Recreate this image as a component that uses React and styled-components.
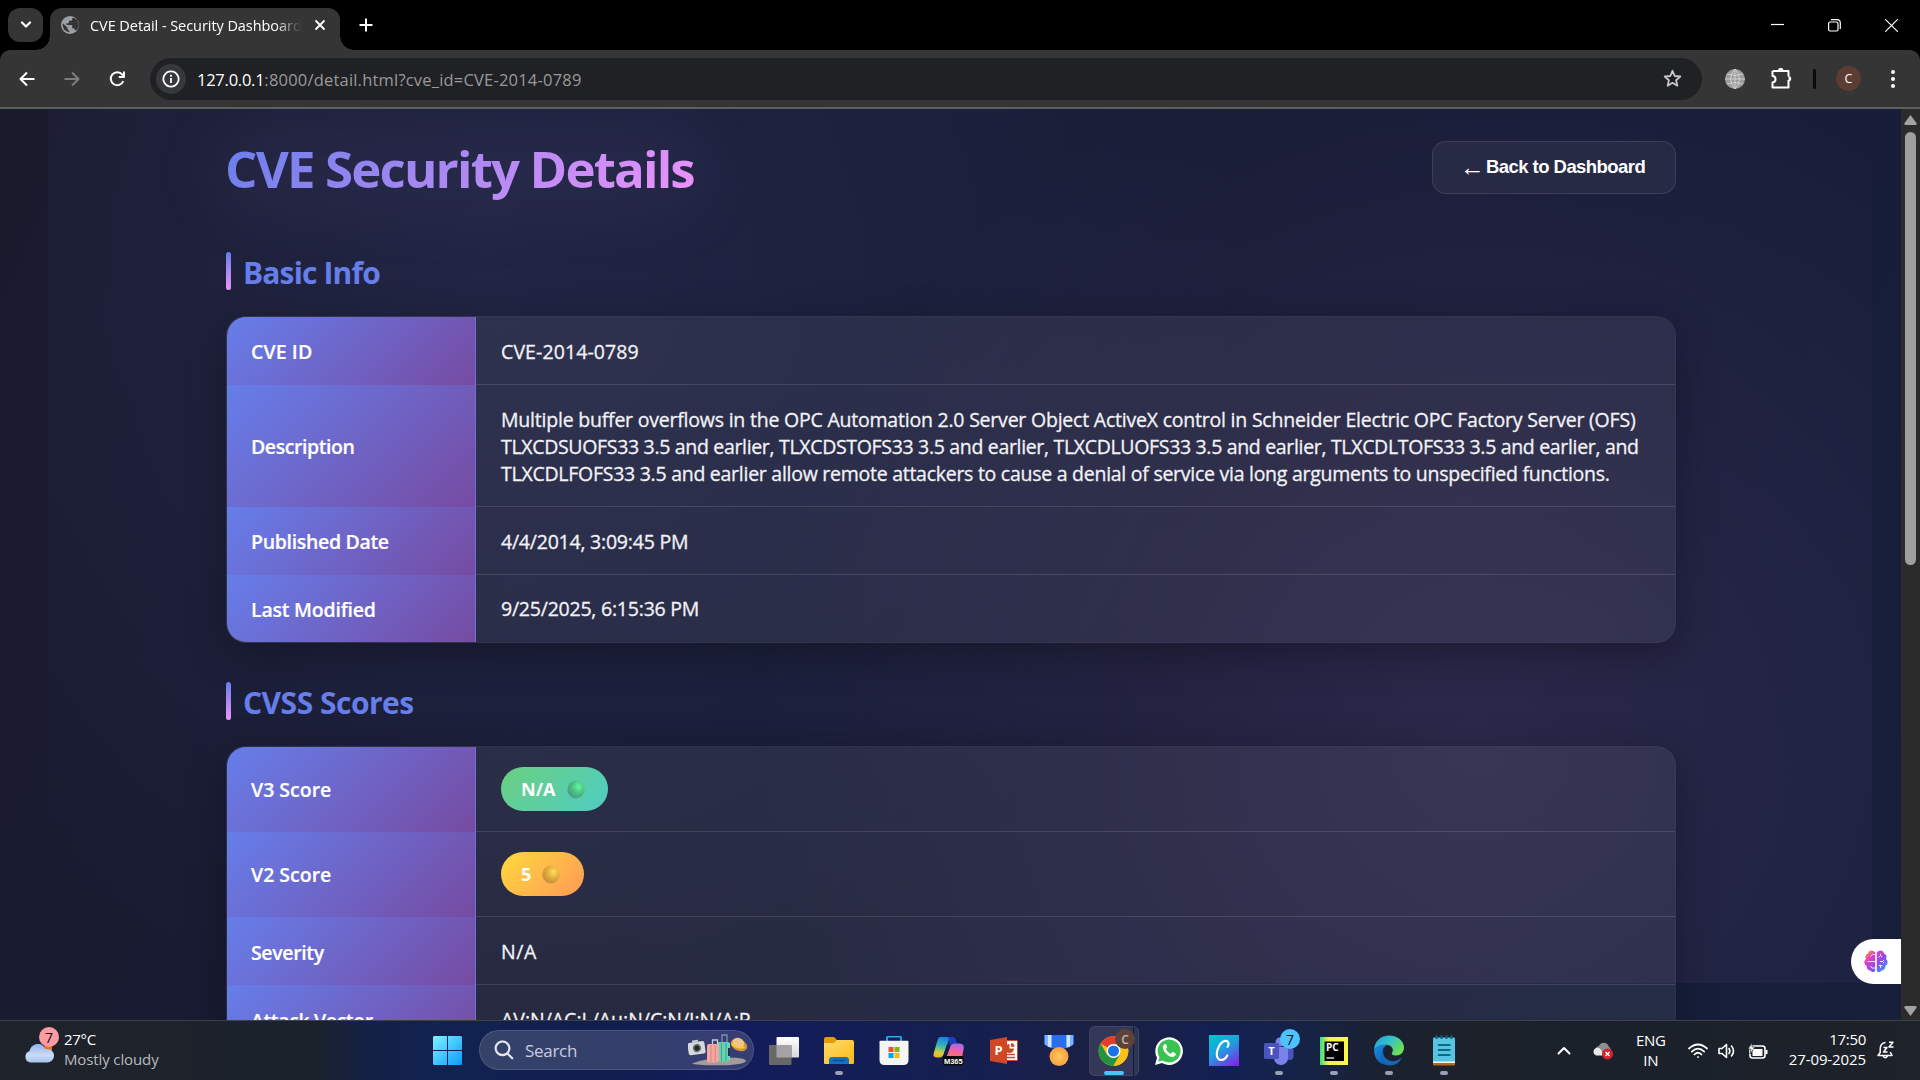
import React from "react";
import styled, { createGlobalStyle } from "styled-components";

const Global = createGlobalStyle`
  *, *::before, *::after { box-sizing: border-box; }
  html, body { margin: 0; padding: 0; background: #000; overflow: hidden; }
  body, button { font-family: "Open Sans", "Noto Sans", sans-serif; }
  svg { display: block; flex: none; }
`;

const Screen = styled.div`
  width: 1920px;
  height: 1080px;
  display: flex;
  flex-direction: column;
  overflow: hidden;
`;

/* Plain text whose tracking and size vary from use to use */
const Label = styled.span`
  font-size: ${(p) => p.$size}px;
  font-weight: ${(p) => p.$weight || 400};
  letter-spacing: ${(p) => p.$track || 0}px;
  color: ${(p) => p.$color || "#fff"};
  -webkit-text-stroke: ${(p) => p.$stroke || 0}px currentColor;
  white-space: pre;
`;

/* ---------- tab strip ---------- */
const TabStrip = styled.div`
  height: 50px;
  flex: none;
  display: flex;
  align-items: flex-start;
  padding: 8px 0 0 8px;
  background: #000;
`;
const TabSearch = styled.div`
  width: 35px;
  height: 34px;
  border-radius: 12px;
  background: #353535;
  display: grid;
  place-items: center;
`;
const Tab = styled.div`
  position: relative;
  width: 290px;
  height: 42px;
  margin-left: 7px;
  padding: 0 12px 0 11px;
  display: flex;
  align-items: center;
  background: #353535;
  border-radius: 12px 12px 0 0;
  &::before, &::after {
    content: "";
    position: absolute;
    bottom: 0;
    width: 14px;
    height: 14px;
  }
  &::before { left: -14px; background: radial-gradient(circle at 0 0, transparent 13.5px, #353535 14px); }
  &::after { right: -14px; background: radial-gradient(circle at 100% 0, transparent 13.5px, #353535 14px); }
`;
const TabTitle = styled.div`
  width: 212px;
  margin: -7px 0 0 11px;
  overflow: hidden;
  line-height: 20px;
  -webkit-mask-image: linear-gradient(90deg, #000 185px, transparent 211px);
  mask-image: linear-gradient(90deg, #000 185px, transparent 211px);
`;
const TabIcon = styled.div` margin-top: -8px; `;
const TabClose = styled.div` margin: -8px 0 0 12px; `;
const NewTab = styled.div`
  width: 34px;
  height: 34px;
  margin-left: 9px;
  display: grid;
  place-items: center;
`;
const WindowButtons = styled.div`
  margin-left: auto;
  height: 34px;
  display: flex;
  align-items: center;
`;
const WindowButton = styled.div`
  width: 57px;
  display: grid;
  place-items: center;
`;

/* ---------- toolbar ---------- */
const ToolbarWrap = styled.div` background: #000; flex: none; `;
const Toolbar = styled.div`
  height: 59px;
  padding: 1px 9px 1px 8px;
  display: flex;
  align-items: center;
  background: #353535;
  border-radius: 10px 10px 0 0;
  border-bottom: 2px solid #5d5f5e;
`;
const NavButton = styled.div`
  width: 38px;
  height: 38px;
  margin-right: 7px;
  display: grid;
  place-items: center;
`;
const Omnibox = styled.div`
  width: 1552px;
  height: 42px;
  margin: 0 0 0 7px;
  padding: 0 20px 0 6px;
  display: flex;
  align-items: center;
  border-radius: 21px;
  background: #202124;
`;
const Url = styled.div` padding-top: 1px; `;
const SiteInfo = styled.div`
  width: 30px;
  height: 30px;
  border-radius: 50%;
  background: #37383a;
  display: grid;
  place-items: center;
  margin-right: 11px;
`;
const Star = styled.div` margin-left: auto; `;
const ToolIcon = styled.div`
  width: ${(p) => p.$w}px;
  display: grid;
  place-items: center;
`;
const Divider = styled.div`
  width: 3px;
  height: 20px;
  border-radius: 2px;
  background: #0b0b0b;
  margin: 0 20px 0 8px;
`;
const Avatar = styled.div`
  width: 25px;
  height: 25px;
  border-radius: 50%;
  background: #5c3d33;
  display: grid;
  place-items: center;
`;

/* ---------- page ---------- */
const Viewport = styled.div`
  height: 911px;
  flex: none;
  display: flex;
  overflow: hidden;
`;
const Page = styled.main`
  position: relative;
  width: 1901px;
  height: 911px;
  overflow: hidden;
  background: linear-gradient(115deg, #1a1a2d 0%, #191c34 35%, #181d38 70%, #171f3b 100%);
`;
const Glow = styled.div`
  position: absolute;
  left: 48px;
  top: 0;
  width: 1824px;
  height: 874px;
  background:
    radial-gradient(circle at 24% 18%, rgba(102, 126, 234, 0.1), transparent 760px),
    radial-gradient(circle at 78% 72%, rgba(240, 147, 251, 0.09), transparent 720px);
`;
const Container = styled.div`
  position: relative;
  width: 1450px;
  margin-left: 226px;
`;
const Header = styled.header`
  display: flex;
  justify-content: space-between;
  align-items: flex-start;
  height: 143px;
  padding-top: 32px;
`;
const Title = styled.h1`
  margin: -9px 0 0 -1px;
  font-size: 51px;
  font-weight: 700;
  line-height: 72px;
  letter-spacing: ${(p) => p.$track}px;
  white-space: pre;
  color: transparent;
  background: linear-gradient(135deg, #667eea 0%, #f093fb 100%);
  -webkit-background-clip: text;
  background-clip: text;
  filter: drop-shadow(0 0 38px rgba(200, 147, 251, 0.25));
`;
const BackButton = styled.button`
  width: 244px;
  height: 53px;
  padding: 0 0 2px 25px;
  display: flex;
  align-items: center;
  border: 1px solid rgba(255, 255, 255, 0.1);
  border-radius: 14px;
  background: rgba(255, 255, 255, 0.05);
  color: #fff;
  font: 700 18.5px "Liberation Sans", Arial, sans-serif;
  letter-spacing: -0.55px;
  white-space: pre;
`;
const Arrow = styled.span`
  width: 28px;
  font-size: 25px;
  font-weight: 400;
  line-height: 20px;
`;
const SectionHead = styled.div`
  height: 38px;
  margin-bottom: ${(p) => p.$gap}px;
  display: flex;
  align-items: center;
  &::before {
    content: "";
    width: 5px;
    height: 38px;
    margin-right: 12px;
    border-radius: 2.5px;
    background: linear-gradient(180deg, #667eea, #f093fb);
  }
`;
const SectionTitle = styled.h2`
  margin: 0;
  padding-top: 4px;
  font-size: 30px;
  font-weight: 700;
  line-height: 38px;
  letter-spacing: ${(p) => p.$track}px;
  color: #667eea;
  white-space: pre;
`;
const Table = styled.div`
  margin-bottom: 39px;
  border: 1px solid rgba(255, 255, 255, 0.03);
  border-radius: 20px;
  overflow: hidden;
  background: rgba(255, 255, 255, 0.062);
  box-shadow: 0 10px 40px rgba(0, 0, 0, 0.3);
`;
const Row = styled.div`
  display: grid;
  grid-template-columns: 249px 1fr;
  height: ${(p) => p.$h}px;
`;
const Th = styled.div`
  padding: ${(p) => p.$drop}px 0 0 24px;
  display: flex;
  align-items: center;
  background: linear-gradient(135deg, #667eea 0%, #764ba2 100%);
  border-right: 1px solid #6a72d8;
`;
const Td = styled.div`
  padding: ${(p) => p.$drop}px 0 0 25px;
  display: flex;
  flex-direction: column;
  align-items: flex-start;
  justify-content: center;
  line-height: 27px;
  border-bottom: 1px solid ${(p) => (p.$last ? "transparent" : "rgba(255,255,255,0.12)")};
`;
const Badge = styled.div`
  height: 44px;
  padding: 0 24px 0 20px;
  display: flex;
  align-items: center;
  gap: 11px;
  border-radius: 22px;
  width: ${(p) => p.$w}px;
  background: linear-gradient(135deg, ${(p) => p.$from}, ${(p) => p.$to});
`;
const BrainTab = styled.div`
  position: absolute;
  right: 0;
  top: 830px;
  width: 50px;
  height: 45px;
  padding-left: 13px;
  display: flex;
  align-items: center;
  border-radius: 23px 0 0 23px;
  background: #fff;
`;
const Scrollbar = styled.div`
  width: 19px;
  background: #2b2b2b;
  display: flex;
  flex-direction: column;
  align-items: center;
  padding: 6px 0 4px;
`;
const Thumb = styled.div`
  width: 11px;
  height: 433px;
  margin: 7px 0 auto;
  border-radius: 6px;
  background: #9f9f9f;
`;

/* ---------- taskbar ---------- */
const Taskbar = styled.footer`
  height: 60px;
  flex: none;
  display: flex;
  border-top: 1px solid #3d4148;
  background: linear-gradient(90deg, #1e232b 0, #1c222b 310px, #142147 375px, #122250 440px, #101e50 620px, #131c5c 720px, #131e55 860px, #16204e 1000px, #1c2042 1110px, #122052 1220px, #15234a 1290px, #1a2130 1380px, #1d222a 1480px, #1a212b 1600px, #1e2229 1920px);
`;
const Weather = styled.div`
  width: 420px;
  padding: 5px 0 0 24px;
  display: flex;
`;
const Lines = styled.div`
  display: flex;
  flex-direction: column;
  align-items: ${(p) => p.$align || "flex-start"};
  margin: ${(p) => p.$shift || 0}px 0 0;
  line-height: 20px;
`;
const AppSlot = styled.div`
  width: 55px;
  height: 59px;
  display: grid;
  place-items: center;
  position: relative;
`;
const Running = styled.i`
  position: absolute;
  bottom: 5px;
  left: 50%;
  width: ${(p) => (p.$active ? 20 : 8)}px;
  height: 4px;
  margin-left: ${(p) => (p.$active ? -10 : -4)}px;
  border-radius: 2px;
  background: ${(p) => (p.$active ? "#4cc2ff" : "#9a9fb4")};
`;
const ActiveTile = styled.div`
  width: 50px;
  height: 50px;
  border-radius: 6px;
  background: linear-gradient(90deg, rgba(255,255,255,.11) 43px, rgba(0,0,0,.2) 43px, rgba(0,0,0,.2) 44px, rgba(255,255,255,.09) 44px);
  border: 1px solid rgba(255, 255, 255, 0.07);
  display: grid;
  place-items: center;
`;
const SearchBox = styled.div`
  width: 275px;
  height: 40px;
  margin: 9px 2px 0 4px;
  padding: 0 5px 0 14px;
  display: flex;
  align-items: center;
  border-radius: 20px;
  border: 1px solid rgba(255, 255, 255, 0.12);
  background: rgba(255, 255, 255, 0.15);
`;
const Count = styled.div`
  position: absolute;
  left: ${(p) => p.$x}px;
  top: ${(p) => p.$y}px;
  width: ${(p) => p.$d}px;
  height: ${(p) => p.$d}px;
  border-radius: 50%;
  background: ${(p) => p.$bg};
  display: grid;
  place-items: center;
`;
const WeatherIcon = styled.div`
  position: relative;
  width: 30px;
  height: 48px;
  padding-top: 17px;
  margin-right: 10px;
`;
const Tray = styled.div`
  margin-left: auto;
  display: flex;
  align-items: center;
  padding-right: 25px;
`;
const TrayItem = styled.div`
  width: ${(p) => p.$w}px;
  display: grid;
  place-items: center;
`;
const SearchArt = styled.div` margin-left: auto; `;
const Gap = styled.div` width: ${(p) => p.$w}px; flex: none; `;

/* ---------- drawings ---------- */
const Ball = ({ id, hi, mid, lo }) => (
  <svg width="18" height="19" viewBox="0 0 18 19">
    <defs>
      <radialGradient id={id} cx="0.65" cy="0.35" r="0.7">
        <stop offset="0" stopColor={hi} /><stop offset="0.55" stopColor={mid} /><stop offset="1" stopColor={lo} />
      </radialGradient>
    </defs>
    <ellipse cx="9" cy="9.5" rx="8.6" ry="9" fill={`url(#${id})`} />
  </svg>
);
const Globe = () => (
  <svg width="18" height="18" viewBox="0 0 18 18">
    <circle cx="9" cy="9" r="9" fill="#9aa0a8" />
    <path d="M11.3 1.8v1.4q0 1.5-1.6 1.5H8v1.6q0 .9-1 .9H5.500v1.700h4.700q1 0 1 1v2.400h.9q1.200 0 1.500 1.200l1.200 1.300A7.200 7.200 0 0 0 11.300 1.800zM8.200 16.200v-1.800q-1.700 0-1.700-1.700v-.9L1.900 7.300a7.200 7.200 0 0 0 6.300 8.900z" fill="#353535" />
  </svg>
);
const Windows = () => (
  <svg width="29" height="29" viewBox="0 0 29 29">
    <defs><linearGradient id="win" x1="0" y1="0" x2="1" y2="1"><stop offset="0" stopColor="#7df3ff" /><stop offset="1" stopColor="#0a9bff" /></linearGradient></defs>
    <path d="M1 0h13v14H0V1zM15 0h13l1 1v13H15zM0 15h14v14H1l-1-1zM15 15h14v13l-1 1H15z" fill="url(#win)" />
  </svg>
);
const Travel = () => (
  <svg width="60" height="32" viewBox="0 0 60 32">
    <path d="M4 29.500Q18 24 40 23.500q17 0 18 3.500-2 4-26 4.300-24 .2-28-1.800z" fill="#a39c98" />
    <g transform="rotate(-8 8 14)">
      <rect x="0" y="8" width="17" height="12.500" rx="2" fill="#d7d9dc" /><rect x="5" y="6" width="6" height="3" fill="#c5c8cc" />
      <circle cx="9" cy="14.200" r="4.200" fill="#6d757c" /><circle cx="9" cy="14.200" r="2.600" fill="#23282d" />
    </g>
    <path d="M34 8.500V1h5v7.500" fill="none" stroke="#7d8aa5" strokeWidth="1.400" />
    <rect x="29" y="8" width="13" height="19.500" rx="2" fill="#66d3b4" /><path d="M33.500 9v18M38 9v18" stroke="#3fa98d" strokeWidth="1.100" /><rect x="40" y="14" width="2" height="8" fill="#2a3340" />
    <path d="M24.500 10.500V6h5v4" fill="none" stroke="#c9cdd4" strokeWidth="1.300" />
    <rect x="19" y="10" width="12" height="18.500" rx="2" fill="#f2a8a2" /><path d="M23 11v17M27.200 11v17" stroke="#d98580" strokeWidth="1" />
    <ellipse cx="51" cy="11" rx="8.600" ry="5.800" fill="#cf9246" transform="rotate(24 51 11)" />
    <ellipse cx="50.500" cy="8.500" rx="6" ry="4.600" fill="#efc785" transform="rotate(20 50 8)" /><path d="M43.500 9.500c3 4 8 5 13 3.500" stroke="#ffc928" strokeWidth="2" fill="none" />
  </svg>
);
const TaskView = () => (
  <svg width="30" height="28" viewBox="0 0 30 28">
    <defs><linearGradient id="tv" x1="0" y1="0" x2="0" y2="1"><stop offset="0" stopColor="#fff" /><stop offset="1" stopColor="#d9d9d9" /></linearGradient></defs>
    <rect x="7.5" y="0" width="22.5" height="20.5" rx="1" fill="url(#tv)" />
    <rect x="0" y="8" width="22.5" height="20" rx="1" fill="#686868" /><rect x="7.5" y="8" width="15" height="12.5" fill="#a3a3a5" />
  </svg>
);
const Folder = () => (
  <svg width="30" height="28" viewBox="0 0 30 28">
    <defs><linearGradient id="fo" x1="0" y1="0" x2="1" y2="1"><stop offset="0" stopColor="#ffdc6b" /><stop offset="1" stopColor="#fbb917" /></linearGradient></defs>
    <path d="M0 2q0-2 2-2h8l3 3v6H0z" fill="#e29b09" />
    <path d="M0 6h10l3-3h15q2 0 2 2v21q0 1-1 1H1q-1 0-1-1z" fill="url(#fo)" />
    <path d="M5 27v-4q0-3 3-3h14q3 0 3 3v4z" fill="#0c74c8" /><path d="M9 23.5h12" stroke="#0a4f91" strokeWidth="1.4" />
  </svg>
);
const Store = () => (
  <svg width="30" height="30" viewBox="0 0 30 30">
    <path d="M8 7V2q0-1.300 1.300-1.300h11.400q1.300 0 1.300 1.300v5" fill="none" stroke="#1fb1e8" strokeWidth="1.8" />
    <path d="M.5 5.500q0-.8.8-.8h27.400q.8 0 .8.8V24q0 5-5 5h-19q-5 0-5-5z" fill="#f5f5f5" />
    <rect x="9.5" y="11" width="5" height="5" fill="#f25022" /><rect x="15.5" y="11" width="5" height="5" fill="#7fba00" />
    <rect x="9.5" y="17" width="5" height="5" fill="#00a4ef" /><rect x="15.5" y="17" width="5" height="5" fill="#ffb900" />
  </svg>
);
const M365 = () => (
  <svg width="31" height="30" viewBox="0 0 31 30">
    <defs>
      <linearGradient id="ma" x1="0.4" y1="0" x2="0.2" y2="1"><stop offset="0" stopColor="#1b7ff0" /><stop offset=".4" stopColor="#2fb9b5" /><stop offset=".75" stopColor="#d5cf3b" /><stop offset="1" stopColor="#f2b02b" /></linearGradient>
      <linearGradient id="mb" x1="0.6" y1="0" x2="0.3" y2="1"><stop offset="0" stopColor="#a46bf0" /><stop offset=".5" stopColor="#f062a8" /><stop offset="1" stopColor="#ff7a45" /></linearGradient>
    </defs>
    <path d="M7.500 1h12q-3 .5-4.500 5l-4.500 13q-.8 2.500-3 2.500H4Q-.5 21.500.8 17L4.300 5Q5.400 1 7.500 1z" fill="url(#ma)" />
    <path d="M15 1h4q3 0 4 3l1 3.500h-3.500q-2 0-3.500 2z" fill="#1c3fc4" />
    <path d="M22 7.500h5q4.500.5 3.700 5L29 22H10.500q3-.5 4-4l3-8q1-2.500 4.500-2.500z" fill="url(#mb)" />
    <path d="M6 21.500q3.500 0 4.500-3l3.500-10 3 2-4 11.500z" fill="#131c50" />
    <rect x="10" y="20" width="20.5" height="9.500" rx="2" fill="#0b0b0b" />
    <text x="20.300" y="27.500" textAnchor="middle" fontFamily="Liberation Sans, sans-serif" fontWeight="700" fontSize="7.500" fill="#fff">M365</text>
  </svg>
);
const PowerPoint = () => (
  <svg width="28" height="28" viewBox="0 0 28 28">
    <rect x="14" y="3.500" width="13.500" height="20" rx="1" fill="#fff" stroke="#d24726" strokeWidth="1" />
    <path d="M19.500 7v4.500H24A4.500 4.500 0 1 1 19.500 7z" fill="#d24726" /><path d="M21 6a4 4 0 0 1 3.700 3.700H21z" fill="#d24726" />
    <path d="M17 17.500h8M17 20.500h8" stroke="#d24726" strokeWidth="1.6" />
    <path d="M0 3 17 0v27L0 24z" fill="#d24726" />
    <text x="8.5" y="18" textAnchor="middle" fontFamily="Open Sans, sans-serif" fontWeight="700" fontSize="13" fill="#fff">P</text>
  </svg>
);
const Medal = () => (
  <svg width="30" height="32" viewBox="0 0 30 32">
    <defs><radialGradient id="me"><stop offset="0" stopColor="#ffc95a" /><stop offset="1" stopColor="#f7a243" /></radialGradient></defs>
    <path d="M0 0h30v9q-4 4-10 4.500H10Q4 13 0 9z" fill="#2b6df2" /><path d="M1 0h7v12.5Q4 12 1 9.5zM29 0h-7v12.5q4-.5 7-3z" fill="#7fb2fb" /><path d="M4 0h3v12.3L4 11.2zM26 0h-3v12.3l3-1.1z" fill="#cfe6ff" />
    <circle cx="15" cy="21.5" r="9.5" fill="url(#me)" />
  </svg>
);
const Chrome = () => (
  <svg width="31" height="32" viewBox="0 0 48 48">
    <circle cx="24" cy="24" r="23" fill="#fbc116" />
    <path d="M24 24 4.1 12.5A23 23 0 0 1 43.9 12.5z" fill="#e33b2e" />
    <path d="M4.1 12.5 A23 23 0 0 0 24 47L34 29.7 24 24 14 29.7z" fill="#229342" />
    <path d="M24 13.5h20.4A23 23 0 0 1 24 47l10-17.3z" fill="#fbc116" />
    <circle cx="24" cy="24" r="10.8" fill="#fff" /><circle cx="24" cy="24" r="8.6" fill="#1a73e8" />
  </svg>
);
const WhatsApp = () => (
  <svg width="28" height="28" viewBox="0 0 28 28">
    <path d="M0 28l2-7.2A13.8 13.8 0 1 1 7 26z" fill="#fff" />
    <path d="M3.2 24.8 4.5 20.3A11.5 11.5 0 1 1 7.7 23.5z" fill="#3ac351" />
    <path d="M9.5 7.2c-2.600 1.700-2 5.200.8 8.500 3 3.600 6.900 5.400 9.200 3.600 1.300-1 1.500-2.400 1.100-2.800l-3-1.700-1.700 1.900c-2.300-.9-4-2.500-5-4.700l1.400-1.600-1.200-3c-.3-.6-1-.6-1.600-.2z" fill="#fff" />
  </svg>
);
const Canva = () => (
  <svg width="30" height="31" viewBox="0 0 30 30" preserveAspectRatio="none">
    <defs><linearGradient id="ca" x1="0.2" y1="0" x2="0.8" y2="1"><stop offset="0" stopColor="#02c3cc" /><stop offset=".45" stopColor="#1f9fe0" /><stop offset="1" stopColor="#7d2ae8" /></linearGradient></defs>
    <rect width="30" height="30" fill="url(#ca)" />
    <path d="M18.500 11.500c2.300-2.700.7-6.400-2.400-5.800-4.900 1-9.300 9-8.100 14.600 1.200 5.400 7.200 5 10.400-.6" fill="none" stroke="#fff" strokeWidth="2.100" strokeLinecap="round" />
  </svg>
);
const Teams = () => (
  <svg width="30" height="30" viewBox="0 0 30 30">
    <circle cx="16" cy="6" r="4.5" fill="#7b83eb" /><rect x="20" y="11" width="9.5" height="13" rx="4" fill="#4b53bc" />
    <path d="M10 11h14v11a7 7 0 0 1-14 0z" fill="#7b83eb" />
    <rect x="0" y="7" width="15" height="16" rx="1.5" fill="#4b53bc" />
    <text x="7.5" y="19" textAnchor="middle" fontFamily="Open Sans, sans-serif" fontWeight="700" fontSize="11" fill="#fff">T</text>
  </svg>
);
const PyCharm = () => (
  <svg width="28" height="28" viewBox="0 0 28 28">
    <defs><linearGradient id="py" x1="0" y1="0" x2="1" y2="0"><stop offset="0" stopColor="#2fe08a" /><stop offset=".3" stopColor="#f4f043" /><stop offset="1" stopColor="#fcf84a" /></linearGradient></defs>
    <rect width="28" height="28" fill="url(#py)" /><rect x="4.5" y="4.5" width="19.5" height="19.5" fill="#000" />
    <text x="6" y="14" fontFamily="Open Sans, sans-serif" fontWeight="700" fontSize="10" fill="#fff">PC</text>
    <path d="M6.5 21h7.5" stroke="#fff" strokeWidth="1.3" />
  </svg>
);
const Edge = () => (
  <svg width="30" height="31" viewBox="0 0 30 30">
    <defs>
      <linearGradient id="e1" x1="0" y1="0" x2="1" y2=".6"><stop offset="0" stopColor="#1e9de0" /><stop offset=".5" stopColor="#35c1c9" /><stop offset="1" stopColor="#6be04f" /></linearGradient>
      <linearGradient id="e2" x1="0" y1="0" x2="1" y2="1"><stop offset="0" stopColor="#1b8fe0" /><stop offset="1" stopColor="#0a4ba0" /></linearGradient>
    </defs>
    <path d="M0 14C1 5 7 0 15 0c9 0 15 6 15 12 0 5-3.5 8-8 8-3 0-5-1-4-2.5 2-3 .5-7-4-8C8 8.5 3 11 0 14z" fill="url(#e1)" />
    <path d="M0 15C2 10 8 8 13 10c-4 1.5-5 5-4 9 1.5 5 6 9 12 8-8 5.5-20 2-21-12z" fill="url(#e2)" />
    <path d="M11 13c-2.5 2-2.5 6 .5 9.5C15 26.5 22 27 28 22c-2 5-7 8-12.5 8C9 29 5 18 11 13z" fill="#1668bd" />
  </svg>
);
const Notepad = () => (
  <svg width="22" height="31" viewBox="0 0 22 31">
    <rect y="26" width="22" height="4.5" rx="1" fill="#b5651d" /><rect y="25" width="22" height="3" fill="#f3f3f3" />
    <rect y="2.5" width="22" height="24" rx="1" fill="#58c5e0" />
    <path d="M3.5 0v4M8.5 0v4M13.5 0v4M18.5 0v4" stroke="#0b5f80" strokeWidth="1.8" />
    <path d="M5 10h12.5M5 15h12.5M5 20h12.5" stroke="#0b6a8c" strokeWidth="1.8" />
  </svg>
);
const Brain = () => (
  <svg width="24" height="23" viewBox="0 0 24 23">
    <defs><linearGradient id="br" x1="0" y1="0" x2="1" y2="1"><stop offset="0" stopColor="#ffb01f" /><stop offset=".3" stopColor="#e33fc0" /><stop offset=".6" stopColor="#8a4df0" /><stop offset="1" stopColor="#1fb0ff" /></linearGradient></defs>
    <path d="M11.2 2.5C9-.8 4.5 0 4 3.6 1.5 4.5.8 7 2 9c-2.600 2-1.800 5.800.6 6.800C2.400 19 5 20.500 6.500 20.600c1.500 2.600 4.700 2 4.700-.6zM12.800 2.500C15-.8 19.500 0 20 3.600c2.500.9 3.200 3.400 2 5.400 2.600 2 1.800 5.800-.6 6.800.2 3.200-2.400 4.700-3.900 4.800-1.500 2.600-4.700 2-4.700-.6z" fill="url(#br)" />
    <path d="M11 4.500H8.500L6.500 6.500M3.500 11.500h7.500M11 18H8l-1.500-2M14.500 7.500l2-2 1.500 1.500M16.500 5.500V3.800M16 11.500h2.500l1.500 1.500M18.500 11.500l1.500-1.500M14.800 15.500h3.500M16.500 15.500V18" fill="none" stroke="#fff" strokeWidth=".9" />
  </svg>
);
const Cloud = () => (
  <svg width="30" height="20" viewBox="0 0 30 20">
    <defs><linearGradient id="cl" x1="0" y1="0" x2="0" y2="1"><stop offset="0" stopColor="#8fb4ee" /><stop offset=".6" stopColor="#c9dcf8" /><stop offset="1" stopColor="#a9c3ea" /></linearGradient></defs>
    <rect x="20" y="2" width="8" height="8" rx="3" fill="#f2701d" />
    <path d="M6 19.5a6 6 0 0 1-.5-11.5C7 3 10 1 14 1c4 0 6 2 7 5 5-.5 9 2 9 6.5 0 4-3 7-7 7z" fill="url(#cl)" />
  </svg>
);
const Line = ({ w, h, d, s = 2, c = "#fff", vb, cap = "round" }) => (
  <svg width={w} height={h} viewBox={vb || `0 0 ${w} ${h}`} fill="none" stroke={c} strokeWidth={s} strokeLinecap={cap} strokeLinejoin="round"><path d={d} /></svg>
);

const BASIC = [
  { h: 67.5, k: "CVE ID", t: 0.1, v: [["CVE-2014-0789", 0.1]] },
  { h: 122, k: "Description", t: -0.42, v: [
    ["Multiple buffer overflows in the OPC Automation 2.0 Server Object ActiveX control in Schneider Electric OPC Factory Server (OFS)", -0.215],
    ["TLXCDSUOFS33 3.5 and earlier, TLXCDSTOFS33 3.5 and earlier, TLXCDLUOFS33 3.5 and earlier, TLXCDLTOFS33 3.5 and earlier, and", -0.325],
    ["TLXCDLFOFS33 3.5 and earlier allow remote attackers to cause a denial of service via long arguments to unspecified functions.", -0.265]] },
  { h: 68, k: "Published Date", t: -0.32, v: [["4/4/2014, 3:09:45 PM", -0.22]] },
  { h: 67.5, k: "Last Modified", t: -0.22, v: [["9/25/2025, 6:15:36 PM", -0.22]], last: true },
];
const SCORES = [
  { h: 85, k: "V3 Score", t: 0, badge: { text: "N/A", w: 107, from: "#6bcf7f", to: "#4ecdc4", ball: ["b1", "#62f79b", "#4bbf83", "#4a9a8c"] } },
  { h: 85, k: "V2 Score", t: 0, badge: { text: "5", w: 83, from: "#ffd93d", to: "#ff9a56", ball: ["b2", "#ffe25a", "#e0aa3c", "#c98a3c"] } },
  { h: 68, k: "Severity", t: -0.35, v: [["N/A", 0.6]] },
  { h: 68, k: "Attack Vector", t: -0.38, v: [["AV:N/AC:L/Au:N/C:N/I:N/A:P", -0.02]] },
];

const DataTable = ({ rows }) => (
  <Table>
    {rows.map((r) => (
      <Row key={r.k} $h={r.h}>
        <Th $drop={r.badge ? 0 : 2}><Label $size={19.5} $weight={600} $track={r.t} $stroke={0.2}>{r.k}</Label></Th>
        <Td $last={r.last} $drop={r.badge ? 0 : 2}>
          {r.badge ? (
            <Badge $w={r.badge.w} $from={r.badge.from} $to={r.badge.to}>
              <Label $size={18} $weight={700}>{r.badge.text}</Label>
              <Ball id={r.badge.ball[0]} hi={r.badge.ball[1]} mid={r.badge.ball[2]} lo={r.badge.ball[3]} />
            </Badge>
          ) : r.v.map(([t, s]) => <Label key={t} $size={19.5} $track={s} $stroke={0.3} $color="#f2f2f6">{t}</Label>)}
        </Td>
      </Row>
    ))}
  </Table>
);

const Pinned = ({ children, run, active }) => (
  <AppSlot>{children}{(run || active) && <Running $active={active} />}</AppSlot>
);

export default function App() {
  return (
    <Screen>
      <Global />
      <TabStrip>
        <TabSearch><Line w={12} h={8} s={2.2} d="M2 1.5 6 5.5 10 1.5" /></TabSearch>
        <Tab>
          <TabIcon><Globe /></TabIcon>
          <TabTitle><Label $size={14.5} $track={-0.06}>CVE Detail - Security Dashboard</Label></TabTitle>
          <TabClose><Line w={12} h={12} s={1.8} d="M2 2l8 8M10 2l-8 8" /></TabClose>
        </Tab>
        <NewTab><Line w={14} h={14} s={2} cap="butt" d="M7 .5v13M.5 7h13" /></NewTab>
        <WindowButtons>
          <WindowButton><Line w={13} h={13} s={1.2} cap="butt" d="M0 5.5h13" /></WindowButton>
          <WindowButton><Line w={13} h={13} s={1.2} d="M2 3h6.500q1.500 0 1.500 1.500v6q0 1.500-1.500 1.500H2q-1.400 0-1.400-1.500v-6Q.6 3 2 3M3.500.7H9q3.300 0 3.300 3.300v5.500" /></WindowButton>
          <WindowButton><Line w={13} h={13} s={1.2} d="M.6.6l11.800 11.800M12.400.6.6 12.400" /></WindowButton>
        </WindowButtons>
      </TabStrip>
      <ToolbarWrap>
        <Toolbar>
          <NavButton><Line w={16} h={16} s={2} cap="butt" d="M15.5 8H2M8 1.5 1.5 8 8 14.5" /></NavButton>
          <NavButton><Line w={16} h={16} s={2} cap="butt" c="#7d7d7d" d="M.5 8H14M8 1.5 14.5 8 8 14.5" /></NavButton>
          <NavButton><Line w={16} h={16} s={2} cap="butt" d="M14.3 10.2A6.500 6.500 0 1 1 13.300 3.600L15 5.600M15 .5V6H9.800" /></NavButton>
          <Omnibox>
            <SiteInfo><Line w={18} h={18} s={1.8} cap="butt" d="M9 1.4a7.6 7.6 0 1 0 .01 0M9 8v5M9 4.8v1.9" /></SiteInfo>
            <Url>
              <Label $size={16.5} $track={-0.25}>127.0.0.1</Label>
              <Label $size={16.5} $track={0.2} $color="#9a9a9a">:8000/detail.html?cve_id=CVE-2014-0789</Label>
            </Url>
            <Star><Line w={19} h={19} s={1.8} c="#c7c7c7" d="M9.5 1.8l2.200 5.200 5.600.5-4.200 3.700 1.200 5.500-4.800-2.900-4.800 2.900 1.200-5.500L1.700 7.500l5.600-.5z" /></Star>
          </Omnibox>
          <Gap $w={23} />
          <ToolIcon $w={20}>
            <svg width="20" height="20" viewBox="0 0 20 20"><circle cx="10" cy="10" r="10" fill="#9c9c9c" /><path d="M10 0v20M0 10h20M2 5q8 3 16 0M2 15q8-3 16 0M10 0Q1 10 10 20M10 0q9 10 0 20" fill="none" stroke="#d6d6d6" strokeWidth=".9" /></svg>
          </ToolIcon>
          <Gap $w={26} />
          <ToolIcon $w={21}>
            <svg width="21" height="21" viewBox="0 0 21 21"><path d="M1.5 3h16v5.500M17.500 12v7.500h-16v-5q3-.2 3-3.200t-3-3.200V3" fill="none" stroke="#fff" strokeWidth="2" strokeLinejoin="round" /><path d="M7 2.600a2.700 2.700 0 0 1 5.400 0zM17.500 8a2.700 2.700 0 0 1 0 5.400z" fill="#fff" /></svg>
          </ToolIcon>
          <Gap $w={13} />
          <Divider />
          <Avatar><Label $size={12.5}>C</Label></Avatar>
          <Gap $w={30} />
          <svg width="4" height="18" viewBox="0 0 4 18" fill="#fff"><circle cx="2" cy="2" r="2" /><circle cx="2" cy="9" r="2" /><circle cx="2" cy="16" r="2" /></svg>
        </Toolbar>
      </ToolbarWrap>
      <Viewport>
        <Page>
          <Glow />
          <Container>
            <Header>
              <Title $track={-1.85}>CVE Security Details</Title>
              <BackButton><Arrow>←</Arrow>Back to Dashboard</BackButton>
            </Header>
            <SectionHead $gap={26}><SectionTitle $track={-0.85}>Basic Info</SectionTitle></SectionHead>
            <DataTable rows={BASIC} />
            <SectionHead $gap={26}><SectionTitle $track={-0.5}>CVSS Scores</SectionTitle></SectionHead>
            <DataTable rows={SCORES} />
          </Container>
          <BrainTab><Brain /></BrainTab>
        </Page>
        <Scrollbar>
          <svg width="13" height="10" viewBox="0 0 13 10"><path d="M6.5 0 12.8 8.5 12 10H1L.2 8.5z" fill="#a2a2a2" /></svg>
          <Thumb />
          <svg width="13" height="10" viewBox="0 0 13 10"><path d="M6.5 10 12.8 1.5 12 0H1L.2 1.5z" fill="#a2a2a2" /></svg>
        </Scrollbar>
      </Viewport>
      <Taskbar>
        <Weather>
          <WeatherIcon>
            <Cloud />
            <Count $x={15} $y={1} $d={20} $bg="#ff99a4"><Label $size={14} $color="#111">7</Label></Count>
          </WeatherIcon>
          <Lines $shift={3}>
            <Label $size={15} $track={-0.3}>27°C</Label>
            <Label $size={15} $track={-0.12} $color="#b9bbbf">Mostly cloudy</Label>
          </Lines>
        </Weather>
        <AppSlot><Windows /></AppSlot>
        <SearchBox>
          <Line w={20} h={20} s={2.2} c="#e4e6ef" d="M8.5 1.5a6.800 6.800 0 1 0 .01 0M13.500 13.500l4.700 4.700" />
          <Gap $w={11} />
          <Label $size={17} $track={-0.3} $color="#c9cde0">Search</Label>
          <SearchArt><Travel /></SearchArt>
        </SearchBox>
        <Pinned><TaskView /></Pinned>
        <Pinned run><Folder /></Pinned>
        <Pinned><Store /></Pinned>
        <Pinned><M365 /></Pinned>
        <Pinned><PowerPoint /></Pinned>
        <Pinned><Medal /></Pinned>
        <Pinned active>
          <ActiveTile><Chrome /></ActiveTile>
          <Count $x={29} $y={8} $d={20} $bg="#5c4238"><Label $size={12} $weight={600} $color="#c5b5ae">C</Label></Count>
        </Pinned>
        <Pinned><WhatsApp /></Pinned>
        <Pinned><Canva /></Pinned>
        <Pinned run><Teams /><Count $x={29} $y={8} $d={20} $bg="#4cc2ff"><Label $size={14} $color="#111">7</Label></Count></Pinned>
        <Pinned run><PyCharm /></Pinned>
        <Pinned run><Edge /></Pinned>
        <Pinned run><Notepad /></Pinned>
        <Tray>
          <TrayItem $w={16}><Line w={14} h={9} s={2} d="M1.5 7.5 7 2l5.500 5.500" /></TrayItem>
          <Gap $w={21} />
          <svg width="20" height="18" viewBox="0 0 20 18"><path d="M3 12a5 5 0 0 1 3-8c2-5 9-4 10 1 3 1 2 7-1 7z" fill="#8d8f92" /><path d="M3 13.5a4 4 0 0 1 0-7.500c4-1 6 2 7 7.500z" fill="#e8e8e8" /><circle cx="14.5" cy="12" r="5.5" fill="#d9202a" /><path d="M12.5 10l4 4M16.5 10l-4 4" stroke="#fff" strokeWidth="1.4" /></svg>
          <Gap $w={23} />
          <Lines $align="center" $shift={-2}><Label $size={15} $track={-0.3}>ENG</Label><Label $size={15}>IN</Label></Lines>
          <Gap $w={22} />
          <Line w={20} h={16} s={1.7} d="M1 5.5Q10-2.500 19 5.500M3.800 8.600Q10 2.800 16.200 8.600M6.500 11.500Q10 8 13.500 11.500M9.800 14h.4" />
          <Gap $w={10} />
          <Line w={20} h={16} s={1.6} d="M1 5.5h3L8.500 1.500v13L4 10.500H1zM11 5.500q1.800 2.500 0 5M13.500 3q4 5 0 10" />
          <Gap $w={10} />
          <svg width="20" height="16" viewBox="0 0 20 16"><rect x="2" y="3" width="15" height="12" rx="2.5" fill="none" stroke="#fff" strokeWidth="1.6" /><rect x="4.5" y="6" width="10" height="7" fill="#fff" /><path d="M18.5 7v4" stroke="#fff" strokeWidth="2" /><path d="M4 0 0 6h3l-1 5 5-7H4z" fill="#fff" stroke="#1b212a" strokeWidth=".6" /></svg>
          <Gap $w={21} />
          <Lines $align="flex-end" $shift={-4}><Label $size={15} $track={-0.3}>17:50</Label><Label $size={15} $track={-0.1}>27-09-2025</Label></Lines>
          <Gap $w={11} />
          <svg width="18" height="19" viewBox="0 0 18 19" fill="none" stroke="#fff" strokeWidth="1.5" strokeLinejoin="round"><path d="M8.5 1.5C4.500 2 3.200 4.500 3.200 8v3.500L1 14.500h14l-1.500-3V11M6 15q2 3.500 4.500 0M6.500 6.500h3.500l-3.500 4.500h4M12 1.200h4L12 6h4.500" /></svg>
        </Tray>
      </Taskbar>
    </Screen>
  );
}
